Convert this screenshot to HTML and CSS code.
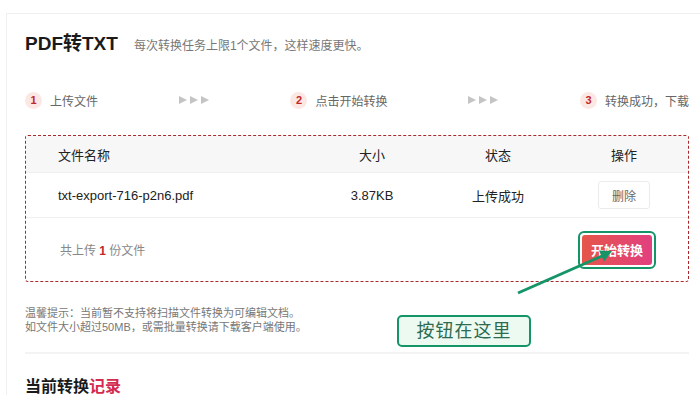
FILE: index.html
```html
<!DOCTYPE html>
<html lang="zh">

<head>
    <meta charset="UTF-8">
    <meta name="viewport" content="width=device-width, initial-scale=1.0">
    <title>PDF转TXT</title>
    <link rel="stylesheet" href="styles.css">
</head>

<body>
    <div class="card">
        <div class="head">
            <h1>PDF转TXT</h1>
            <span class="head-tip">每次转换任务上限1个文件，这样速度更快。</span>
        </div>

        <div class="steps">
            <div class="step"><i>1</i>上传文件</div>
            <div class="step-arrows">
                <svg width="31" height="10" viewBox="0 0 31 10">
                    <polygon points="0,1 8,5 0,9" />
                    <polygon points="11,1 19,5 11,9" />
                    <polygon points="22,1 30,5 22,9" />
                </svg>
            </div>
            <div class="step"><i>2</i>点击开始转换</div>
            <div class="step-arrows">
                <svg width="31" height="10" viewBox="0 0 31 10">
                    <polygon points="0,1 8,5 0,9" />
                    <polygon points="11,1 19,5 11,9" />
                    <polygon points="22,1 30,5 22,9" />
                </svg>
            </div>
            <div class="step"><i>3</i>转换成功，下载</div>
        </div>

        <div class="file-box">
            <div class="file-row file-head">
                <div class="col-name">文件名称</div>
                <div class="col">大小</div>
                <div class="col">状态</div>
                <div class="col">操作</div>
            </div>
            <div class="file-row">
                <div class="col-name">txt-export-716-p2n6.pdf</div>
                <div class="col">3.87KB</div>
                <div class="col">上传成功</div>
                <div class="col"><button class="btn-del">删除</button></div>
            </div>
            <div class="file-foot">
                <span class="count">共上传 <b>1</b> 份文件</span>
                <div class="mark">
                    <button class="btn-start">开始转换</button>
                </div>
            </div>
        </div>

        <p class="notice">温馨提示：当前暂不支持将扫描文件转换为可编辑文档。<br>如文件大小超过50MB，或需批量转换请下载客户端使用。</p>

        <div class="divider"></div>

        <h2 class="record-title">当前转换<span>记录</span></h2>
    </div>

    <!-- annotation overlay -->
    <svg class="pointer" width="700" height="395" viewBox="0 0 700 395">
        <line x1="518" y1="293" x2="602" y2="256" />
        <polygon points="612,251 604,261.5 599,250.5" />
    </svg>
    <div class="callout">按钮在这里</div>
</body>

</html>
```

FILE: styles.css
```css
* {
    padding: 0;
    margin: 0;
    box-sizing: border-box;
}

html,
body {
    width: 100%;
    height: 100%;
}

body {
    position: relative;
    overflow: hidden;
    background-color: #fff;
    font-family: "Liberation Sans", "Noto Sans CJK SC", sans-serif;
    color: #333;
}

.card {
    margin: 13px 0 0 6px;
    border-top: 1px solid #efefef;
    border-left: 1px solid #efefef;
    padding: 0 11px 0 18px;
    height: 100%;
}

.head {
    display: flex;
    align-items: baseline;
    padding-top: 18px;
    line-height: 24px;
}

.head h1 {
    font-size: 19px;
    font-weight: bold;
    color: #1a1a1a;
}

.head-tip {
    margin-left: 16px;
    font-size: 12px;
    color: #777;
}

.steps {
    display: flex;
    justify-content: space-between;
    align-items: center;
    margin-top: 32px;
    height: 20px;
}

.step {
    display: flex;
    align-items: center;
    font-size: 12px;
    color: #666;
    white-space: nowrap;
}

.step i {
    width: 17px;
    height: 17px;
    border-radius: 50%;
    background-color: #fbe8e4;
    color: #c0282b;
    font-style: normal;
    font-weight: bold;
    font-size: 11px;
    line-height: 17px;
    text-align: center;
    margin-right: 8px;
}

.step-arrows svg {
    display: block;
    fill: #c4c4c4;
}

.file-box {
    margin-top: 25px;
    border: 1px dashed #a8282b;
    border-radius: 3px;
}

.file-row {
    display: grid;
    grid-template-columns: 251px 126px 126px 126px;
    align-items: center;
    padding-left: 32px;
    height: 45px;
    border-bottom: 1px solid #efefef;
    font-size: 13px;
    color: #222;
}

.file-row.file-head {
    height: 37px;
    background-color: #f7f7f7;
}

.file-row .col {
    text-align: center;
}

.btn-del {
    width: 52px;
    height: 28px;
    border: 1px solid #ebebeb;
    border-radius: 3px;
    background: #fff;
    color: #666;
    font-family: inherit;
    font-size: 12px;
}

.file-foot {
    display: flex;
    justify-content: space-between;
    align-items: center;
    height: 63px;
    padding: 0 32px 0 34px;
}

.count {
    font-size: 12px;
    color: #888;
}

.count b {
    color: #c0282b;
}

.mark {
    border: 2px solid #149467;
    border-radius: 6px;
    padding: 2px;
}

.btn-start {
    display: block;
    width: 70px;
    height: 30px;
    border: none;
    border-radius: 3px;
    background: linear-gradient(to right, #e5564a, #e23f80);
    color: #fff;
    font-family: inherit;
    font-size: 13px;
    font-weight: bold;
}

.notice {
    margin-top: 24px;
    font-size: 11px;
    line-height: 14px;
    color: #777;
}

.divider {
    margin-top: 18px;
    height: 2px;
    background-color: #f3f3f3;
}

.record-title {
    margin-top: 22px;
    font-size: 16px;
    line-height: 22px;
    font-weight: bold;
    color: #1a1a1a;
}

.record-title span {
    color: #d42a4f;
}

button:focus,
button:active {
    outline: none;
}

.pointer {
    position: absolute;
    left: 0;
    top: 0;
    pointer-events: none;
}

.pointer line {
    stroke: #149467;
    stroke-width: 3;
}

.pointer polygon {
    fill: #149467;
}

.callout {
    position: absolute;
    left: 397px;
    top: 315px;
    width: 134px;
    height: 32px;
    border: 2px solid #149467;
    border-radius: 5px;
    background-color: #ecfaf2;
    color: #2d6a4f;
    font-size: 18px;
    line-height: 28px;
    text-align: center;
    letter-spacing: 1px;
}
```
